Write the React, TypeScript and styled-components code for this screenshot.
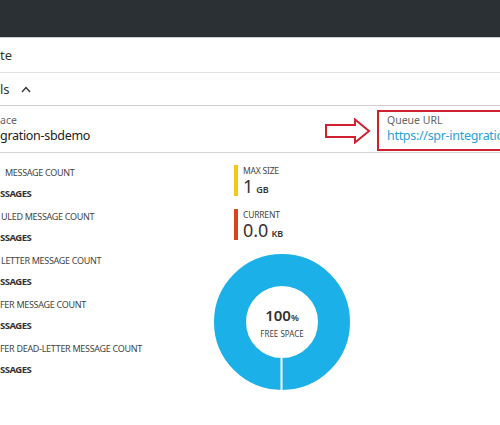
import React from "react";
import styled, { createGlobalStyle } from "styled-components";

const GlobalStyle = createGlobalStyle`
  html, body { margin: 0; padding: 0; background: #fff; }
  body { overflow: hidden; font-family: "Noto Sans", "Open Sans", sans-serif; color: #333; }
`;

const Page = styled.div`
  width: 500px;
  height: 425px;
  overflow: hidden;
  background: #fff;
`;

const TopBar = styled.div`
  height: 37px;
  background: #2b3035;
  border-bottom: 1px solid #c9cccf;
`;

const CommandBar = styled.div`
  height: 34px;
  display: flex;
  align-items: center;
  font-size: 13px;
  color: #333;
  border-bottom: 1px solid #e1e1e1;
`;

const Essentials = styled.div`
  height: 32px;
  display: flex;
  align-items: center;
  gap: 11px;
  font-size: 13px;
  color: #333;
  border-bottom: 1px solid #cfcfcf;
`;

const InfoRow = styled.div`
  height: 46px;
  display: grid;
  grid-template-columns: 325px 52px 1fr;
  border-bottom: 1px solid #d4d4d4;
`;

const Field = styled.div`
  display: flex;
  flex-direction: column;
  padding-top: 7px;
`;

const FieldLabel = styled.div`
  font-size: 10.5px;
  line-height: 14px;
  color: #666;
`;

const FieldValue = styled.div<{ $link?: boolean }>`
  font-size: 12.5px;
  letter-spacing: -0.3px;
  line-height: 17px;
  color: ${(p) => (p.$link ? "#2a9fd8" : "#222")};
  white-space: nowrap;
`;

const ArrowBox = styled.div`
  padding-top: 12px;
`;

const UrlBox = styled.div`
  margin-top: 4px;
  width: 300px;
  height: 41px;
  border: 2px solid #d1202f;
  padding: 1px 0 0 8px;
  box-sizing: border-box;
  overflow: hidden;
`;

const Content = styled.div`
  display: grid;
  grid-template-columns: 212px 140px;
`;

const List = styled.div`
  padding-top: 12px;
`;

const Stat = styled.div`
  height: 44px;
`;

const StatLabel = styled.div<{ $indent?: number }>`
  font-size: 9px;
  letter-spacing: -0.3px;
  line-height: 16px;
  color: #444;
  white-space: nowrap;
  padding-left: ${(p) => p.$indent ?? 0}px;
`;

const StatValue = styled.div`
  margin-top: 5px;
  font-size: 9.5px;
  letter-spacing: -0.5px;
  line-height: 16px;
  font-weight: 700;
  color: #333;
`;

const Side = styled.div`
  display: flex;
  flex-direction: column;
  padding-top: 12px;
`;

const Metric = styled.div<{ $color: string }>`
  margin-left: 22px;
  height: 31px;
  border-left: 4px solid ${(p) => p.$color};
  padding-left: 5px;
  margin-bottom: 13px;
  display: flex;
  flex-direction: column;
`;

const MetricLabel = styled.div`
  font-size: 8.5px;
  letter-spacing: -0.2px;
  line-height: 12px;
  color: #444;
`;

const MetricValue = styled.div`
  display: flex;
  align-items: baseline;
  gap: 3px;
  line-height: 19px;
`;

const Big = styled.span`
  font-size: 18px;
  color: #333;
`;

const Unit = styled.span`
  font-size: 9px;
  font-weight: 600;
  color: #333;
`;

const DonutWrap = styled.div`
  position: relative;
  width: 140px;
  height: 140px;
  margin-top: -1px;
`;

const DonutText = styled.div`
  position: absolute;
  left: 0;
  right: 0;
  top: 54px;
  display: flex;
  flex-direction: column;
  align-items: center;
`;

const Percent = styled.div`
  font-size: 15px;
  font-weight: 600;
  line-height: 18px;
  color: #333;
  span {
    font-size: 9px;
    font-weight: 600;
  }
`;

const FreeLabel = styled.div`
  font-size: 8px;
  line-height: 11px;
  color: #444;
  margin-top: 1px;
`;

const Chevron = () => (
  <svg width="10" height="7" viewBox="0 0 10 7">
    <path d="M1 6 L5 1.5 L9 6" fill="none" stroke="#333" strokeWidth="1.3" />
  </svg>
);

const RedArrow = () => (
  <svg width="46" height="26" viewBox="0 0 46 26">
    <path
      d="M1 7 H30 V1.5 L44 13 L30 24.5 V19 H1 Z"
      fill="#fff"
      stroke="#d1202f"
      strokeWidth="2"
      strokeLinejoin="miter"
    />
  </svg>
);

const stats = [
  { label: "MESSAGE COUNT", indent: 5 },
  { label: "ULED MESSAGE COUNT", indent: 1 },
  { label: "LETTER MESSAGE COUNT", indent: 1 },
  { label: "FER MESSAGE COUNT", indent: 0 },
  { label: "FER DEAD-LETTER MESSAGE COUNT", indent: 0 },
];

export default function App() {
  return (
    <Page>
      <GlobalStyle />
      <TopBar />
      <CommandBar>te</CommandBar>
      <Essentials>
        <span>ls</span>
        <Chevron />
      </Essentials>
      <InfoRow>
        <Field>
          <FieldLabel>ace</FieldLabel>
          <FieldValue>gration-sbdemo</FieldValue>
        </Field>
        <ArrowBox>
          <RedArrow />
        </ArrowBox>
        <UrlBox>
          <FieldLabel>Queue URL</FieldLabel>
          <FieldValue $link>https://spr-integration-sbdemo.servicebus.windows.net/</FieldValue>
        </UrlBox>
      </InfoRow>
      <Content>
        <List>
          {stats.map((s, i) => (
            <Stat key={i}>
              <StatLabel $indent={s.indent}>{s.label}</StatLabel>
              <StatValue>SSAGES</StatValue>
            </Stat>
          ))}
        </List>
        <Side>
          <Metric $color="#f2c81a">
            <MetricLabel>MAX SIZE</MetricLabel>
            <MetricValue>
              <Big>1</Big>
              <Unit>GB</Unit>
            </MetricValue>
          </Metric>
          <Metric $color="#d9441c">
            <MetricLabel>CURRENT</MetricLabel>
            <MetricValue>
              <Big>0.0</Big>
              <Unit>KB</Unit>
            </MetricValue>
          </Metric>
          <DonutWrap>
            <svg width="140" height="140" viewBox="0 0 140 140">
              <circle cx="70" cy="70" r="52" fill="none" stroke="#1bb0e8" strokeWidth="32" />
              <line x1="69.5" y1="104" x2="69.5" y2="140" stroke="#fff" strokeWidth="2" />
            </svg>
            <DonutText>
              <Percent>
                100<span>%</span>
              </Percent>
              <FreeLabel>FREE SPACE</FreeLabel>
            </DonutText>
          </DonutWrap>
        </Side>
      </Content>
    </Page>
  );
}
